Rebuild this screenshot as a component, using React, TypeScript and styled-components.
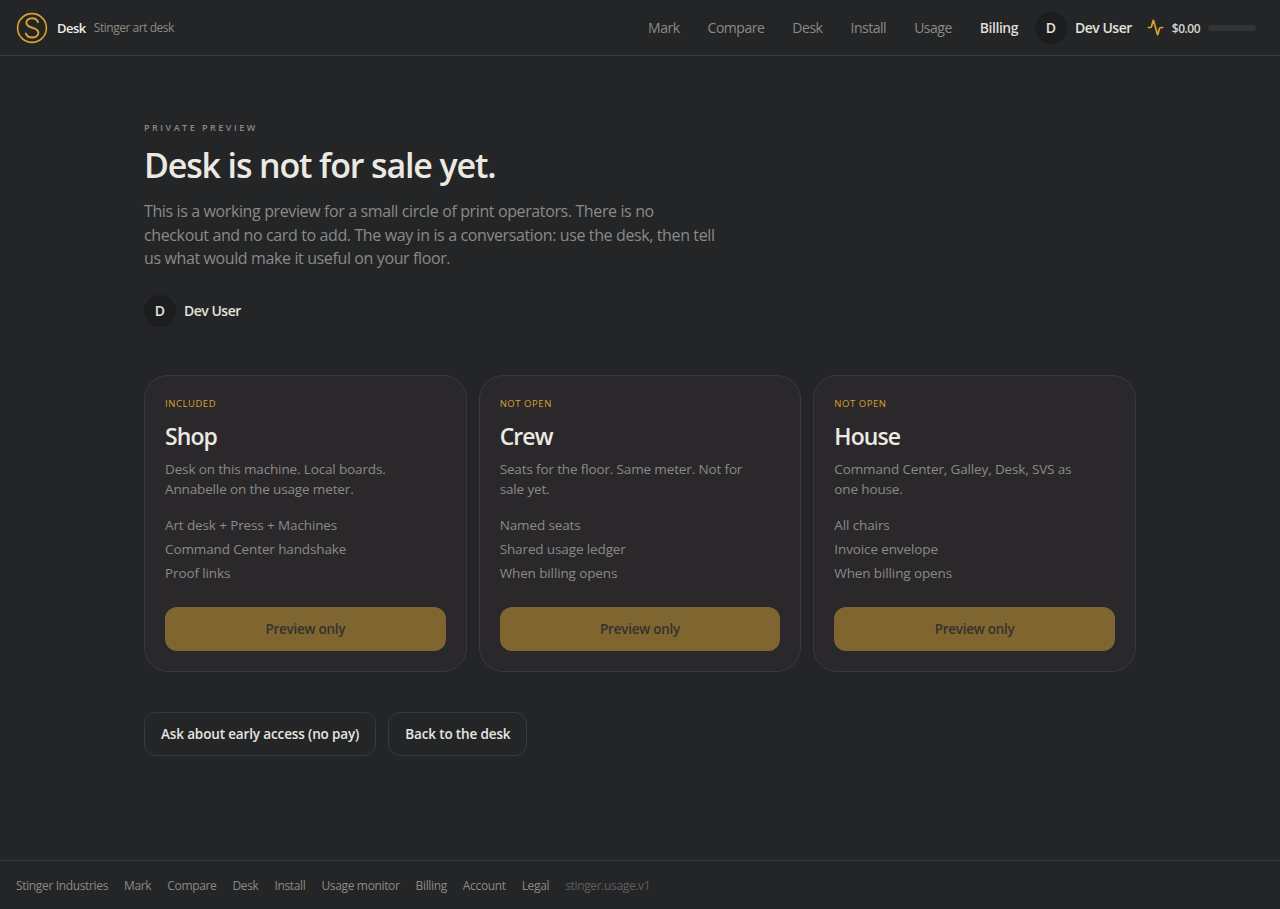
import styled, {createGlobalStyle} from "styled-components";
import {Activity} from "lucide-react";

const GlobalStyle = createGlobalStyle`
    html, body {
        margin: 0;
        padding: 0;
        background: #242527;
    }
    * {
        box-sizing: border-box;
    }
    body {
        font-family: "Open Sans", "Noto Sans", "Liberation Sans", sans-serif;
        color: #e8e6e1;
    }
`;

const Page = styled.div`
    min-height: 909px;
    display: flex;
    flex-direction: column;
`;

const TopBar = styled.header`
    height: 56px;
    border-bottom: 1px solid #3a3b3d;
    padding: 0 24px 0 16px;
    display: flex;
    align-items: center;
    justify-content: space-between;
`;

const Brand = styled.div`
    display: flex;
    align-items: center;
`;

const BrandName = styled.span`
    margin-left: 9px;
    font-size: 13px;
    font-weight: 600;
    letter-spacing: -0.5px;
    color: #ececea;
`;

const BrandTag = styled.span`
    margin-left: 8px;
    font-size: 12px;
    letter-spacing: -0.47px;
    color: #8b8a86;
`;

const TopNav = styled.nav`
    display: flex;
    align-items: center;
`;

const NavLink = styled.a<{$active?: boolean}>`
    margin-right: 28px;
    font-size: 14px;
    letter-spacing: -0.48px;
    font-weight: ${(props) => (props.$active ? 600 : 400)};
    color: ${(props) => (props.$active ? "#dcdad6" : "#8b8a86")};
`;

const Avatar = styled.span`
    width: 32px;
    height: 32px;
    border-radius: 50%;
    background: #1c1d1f;
    display: flex;
    align-items: center;
    justify-content: center;
    font-size: 14px;
    font-weight: 600;
    color: #e3e1dc;
`;

const NavAvatar = styled(Avatar)`
    margin-left: -11px;
`;

const UserName = styled.span`
    margin-left: 8px;
    font-size: 14px;
    font-weight: 600;
    letter-spacing: -0.5px;
    color: #e3e1dc;
`;

const Meter = styled.div`
    margin-left: 15px;
    display: flex;
    align-items: center;
`;

const MeterValue = styled.span`
    margin-left: 8px;
    padding-top: 1px;
    font-size: 12px;
    font-weight: 600;
    letter-spacing: -0.5px;
    color: #d6d4cf;
`;

const MeterTrack = styled.span`
    margin-left: 8px;
    width: 48px;
    height: 6px;
    border-radius: 3px;
    background: #33343a;
`;

const Main = styled.main`
    flex: 1;
    width: 992px;
    margin: 0 auto;
    padding-top: 66px;
`;

const Eyebrow = styled.div`
    font-size: 9px;
    line-height: 12px;
    font-weight: 600;
    letter-spacing: 2.5px;
    color: #8b8a86;
`;

const Title = styled.h1`
    margin: 9px 0 0;
    font-size: 34px;
    line-height: 44px;
    font-weight: 600;
    letter-spacing: -1.15px;
    color: #ece9e2;
`;

const Lead = styled.p`
    margin: 13px 0 0;
    width: 572px;
    font-size: 16px;
    line-height: 23.5px;
    letter-spacing: -0.38px;
    color: #8b8a86;
`;

const UserRow = styled.div`
    margin-top: 24px;
    display: flex;
    align-items: center;
`;

const Plans = styled.section`
    margin-top: 48px;
    display: grid;
    grid-template-columns: repeat(3, 1fr);
    gap: 12px;
`;

const Plan = styled.article`
    height: 297px;
    padding: 20px;
    border: 1px solid #38393c;
    border-radius: 24px;
    background: #2a282b;
    display: flex;
    flex-direction: column;
`;

const PlanStatus = styled.div`
    margin-top: 1px;
    font-size: 9.5px;
    line-height: 14px;
    letter-spacing: 0.55px;
    color: #d9a12f;
`;

const PlanName = styled.h2`
    margin: 9px 0 0;
    font-size: 23px;
    line-height: 32px;
    font-weight: 600;
    letter-spacing: -0.9px;
    color: #ece9e2;
`;

const PlanText = styled.p`
    margin: 7px 0 0;
    width: 250px;
    font-size: 13.5px;
    line-height: 20px;
    letter-spacing: -0.14px;
    color: #8b8a86;
`;

const FeatureList = styled.ul`
    margin: 14px 0 0;
    padding: 0;
    list-style: none;
`;

const Feature = styled.li`
    font-size: 13.5px;
    line-height: 24px;
    letter-spacing: -0.12px;
    color: #8b8a86;
`;

const PreviewButton = styled.div`
    margin-top: auto;
    height: 44px;
    border-radius: 12px;
    background: #7f6631;
    display: flex;
    align-items: center;
    justify-content: center;
    font-size: 13.5px;
    font-weight: 600;
    letter-spacing: -0.26px;
    color: #34322c;
`;

const Actions = styled.div`
    margin-top: 40px;
    display: flex;
    gap: 12px;
`;

const GhostButton = styled.a`
    height: 44px;
    padding: 0 16px;
    border: 1px solid #38393c;
    border-radius: 12px;
    display: flex;
    align-items: center;
    font-size: 13.5px;
    font-weight: 600;
    letter-spacing: -0.14px;
    color: #e8e6e1;
`;

const Footer = styled.footer`
    height: 49px;
    border-top: 1px solid #38393c;
    padding: 0 16px;
    display: flex;
    align-items: center;
    gap: 16px;
    font-size: 12px;
    letter-spacing: -0.35px;
    color: #8b8a86;
`;

const FooterNote = styled.span`
    color: #5f5f5e;
`;

const plans = [
    {
        status: "INCLUDED",
        name: "Shop",
        text: "Desk on this machine. Local boards. Annabelle on the usage meter.",
        features: ["Art desk + Press + Machines", "Command Center handshake", "Proof links"],
    },
    {
        status: "NOT OPEN",
        name: "Crew",
        text: "Seats for the floor. Same meter. Not for sale yet.",
        features: ["Named seats", "Shared usage ledger", "When billing opens"],
    },
    {
        status: "NOT OPEN",
        name: "House",
        text: "Command Center, Galley, Desk, SVS as one house.",
        features: ["All chairs", "Invoice envelope", "When billing opens"],
    },
];

const navItems = ["Mark", "Compare", "Desk", "Install", "Usage", "Billing"];
const footerItems = ["Stinger Industries", "Mark", "Compare", "Desk", "Install", "Usage monitor", "Billing", "Account", "Legal"];

const App = () => {
    return (
        <Page>
            <GlobalStyle />
            <TopBar>
                <Brand>
                    <svg width="32" height="32" viewBox="0 0 32 32" fill="none" stroke="#d9a12f">
                        <circle cx="16" cy="16" r="14.4" strokeWidth="1.6" />
                        <path d="M22 10c-1-2.400-3.200-3.800-6-3.800-3.300 0-5.600 2-5.600 4.700 0 6 12 3.600 12 9.700 0 2.900-2.700 4.900-6.200 4.900-3 0-5.300-1.400-6.300-3.900" strokeWidth="2" strokeLinecap="round" />
                    </svg>
                    <BrandName>Desk</BrandName>
                    <BrandTag>Stinger art desk</BrandTag>
                </Brand>
                <TopNav>
                    {navItems.map(item => <NavLink key={item} $active={item === "Billing"}>{item}</NavLink>)}
                    <NavAvatar>D</NavAvatar>
                    <UserName>Dev User</UserName>
                    <Meter>
                        <Activity size={17} color="#d9a12f" strokeWidth={2.4} />
                        <MeterValue>$0.00</MeterValue>
                        <MeterTrack />
                    </Meter>
                </TopNav>
            </TopBar>
            <Main>
                <Eyebrow>PRIVATE PREVIEW</Eyebrow>
                <Title>Desk is not for sale yet.</Title>
                <Lead>This is a working preview for a small circle of print operators. There is no checkout and no card to add. The way in is a conversation: use the desk, then tell us what would make it useful on your floor.</Lead>
                <UserRow>
                    <Avatar>D</Avatar>
                    <UserName>Dev User</UserName>
                </UserRow>
                <Plans>
                    {plans.map(plan => (
                        <Plan key={plan.name}>
                            <PlanStatus>{plan.status}</PlanStatus>
                            <PlanName>{plan.name}</PlanName>
                            <PlanText>{plan.text}</PlanText>
                            <FeatureList>
                                {plan.features.map(feature => <Feature key={feature}>{feature}</Feature>)}
                            </FeatureList>
                            <PreviewButton>Preview only</PreviewButton>
                        </Plan>
                    ))}
                </Plans>
                <Actions>
                    <GhostButton>Ask about early access (no pay)</GhostButton>
                    <GhostButton>Back to the desk</GhostButton>
                </Actions>
            </Main>
            <Footer>
                {footerItems.map(item => <span key={item}>{item}</span>)}
                <FooterNote>stinger.usage.v1</FooterNote>
            </Footer>
        </Page>
    );
};

export default App;
